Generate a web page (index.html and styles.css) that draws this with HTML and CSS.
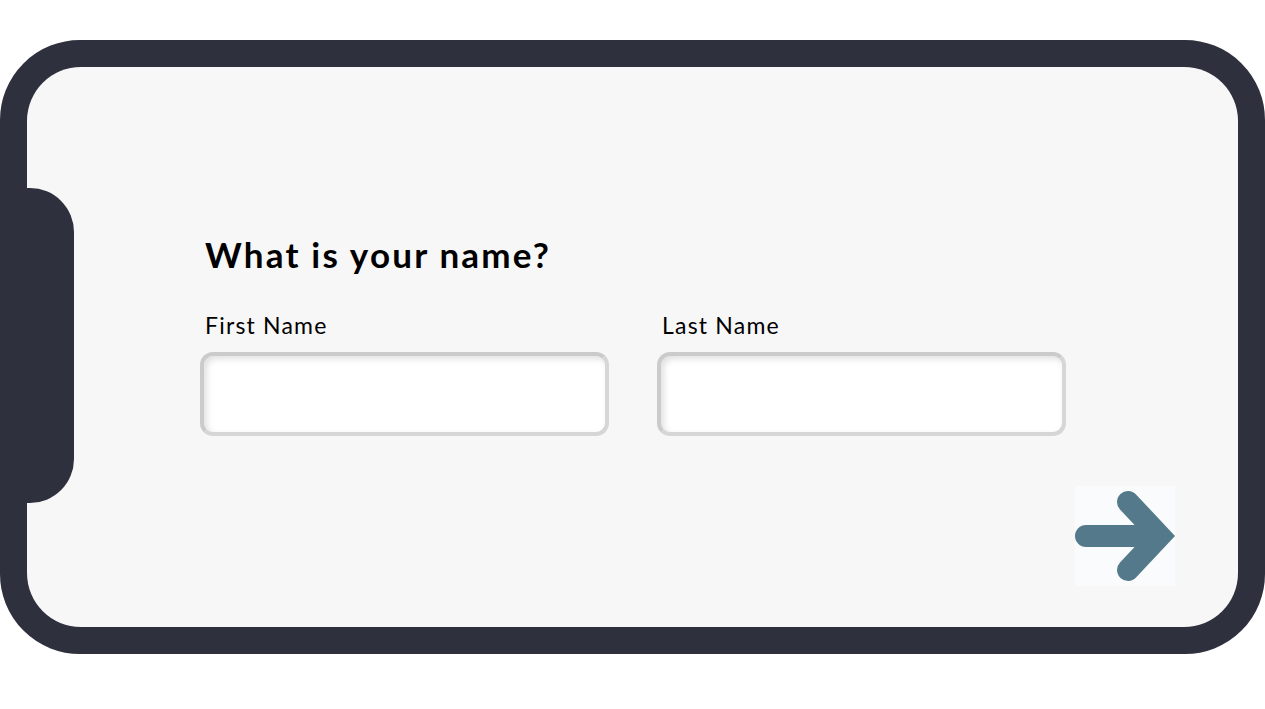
FILE: index.html
```html
<!DOCTYPE html>
<html lang="en">
<head>
<meta charset="utf-8">
<title>What is your name?</title>
<link rel="stylesheet" href="styles.css">
</head>
<body>
<div class="phone">
  <div class="screen">
    <div class="notch"></div>
    <div class="form">
      <h1 class="title">What is your name?</h1>
      <div class="fields">
        <label class="field">
          <span class="label">First Name</span>
          <input class="input" type="text">
        </label>
        <label class="field">
          <span class="label">Last Name</span>
          <input class="input" type="text">
        </label>
      </div>
      <button class="next" type="button" aria-label="Next">
        <svg viewBox="0 0 100 100" width="100" height="100">
          <line x1="11" y1="50" x2="78" y2="50" stroke="#54798a" stroke-width="22" stroke-linecap="round"/>
          <polyline points="53,16 85,50 53,84" fill="none" stroke="#54798a" stroke-width="22" stroke-linecap="round" stroke-linejoin="miter" stroke-miterlimit="4"/>
        </svg>
      </button>
    </div>
  </div>
</div>
</body>
</html>
```
FILE: styles.css
```css
html, body {
  margin: 0;
  padding: 0;
  background: #ffffff;
}
body {
  font-family: Lato, "Noto Sans", sans-serif;
  color: #000;
}
.phone {
  margin-top: 40px;
  width: 1265px;
  height: 614px;
  box-sizing: border-box;
  border: 27px solid #2e303d;
  border-radius: 80px;
  background: #2e303d;
}
.screen {
  position: relative;
  height: 100%;
  background: #f7f7f7;
  border-radius: 54px;
  overflow: hidden;
}
.notch {
  position: absolute;
  left: 0;
  top: 121px;
  width: 47px;
  height: 315px;
  background: #2e303d;
  border-radius: 0 44px 44px 0;
}
.form {
  box-sizing: border-box;
  height: 100%;
  display: flex;
  flex-direction: column;
  padding: 166px 63px 0 173px;
}
.title {
  margin: 0 0 0 5px;
  font-size: 35px;
  line-height: 42px;
  font-weight: 700;
  letter-spacing: 2.2px;
}
.fields {
  display: flex;
  gap: 48px;
  margin-top: 36px;
}
.field {
  display: flex;
  flex-direction: column;
  width: 409px;
}
.label {
  margin-left: 5px;
  font-size: 23px;
  line-height: 28px;
  letter-spacing: 1.2px;
}
.input {
  margin-top: 13px;
  box-sizing: border-box;
  width: 409px;
  height: 84px;
  border: 4px solid #d6d6d6;
  border-top-color: #cbcbcb;
  border-left-color: #cbcbcb;
  border-radius: 13px;
  background: #ffffff;
  box-shadow: inset 3px 3px 6px rgba(0, 0, 0, 0.12);
  outline: none;
}
.next {
  align-self: flex-end;
  margin-top: 50px;
  width: 100px;
  height: 100px;
  padding: 0;
  border: 0;
  background: #fafbfc;
}
.next svg {
  display: block;
}
```
